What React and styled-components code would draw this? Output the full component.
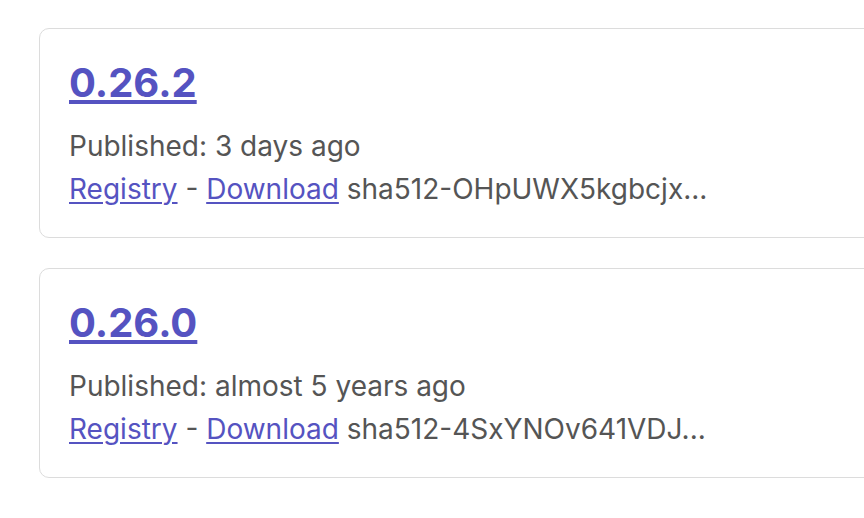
import React from 'react';
import styled, { createGlobalStyle } from 'styled-components';

const GlobalStyle = createGlobalStyle`
  body {
    margin: 0;
    background: #fff;
    font-family: Inter, 'Noto Sans', sans-serif;
    overflow: hidden;
  }
`;

const List = styled.div`
  display: flex;
  flex-direction: column;
  gap: 30px;
  padding: 28px 0 0 39px;
  overflow: hidden;
`;

const Card = styled.div`
  width: 900px;
  flex-shrink: 0;
  border: 1px solid #dcdcdc;
  border-radius: 10px;
  padding: 30px 29px 26px;
  box-sizing: border-box;
`;

const Version = styled.a`
  display: block;
  margin: 0 0 18px;
  font-size: 40px;
  line-height: 48px;
  font-weight: 700;
  color: #5553c1;
  text-decoration: underline;
  text-decoration-thickness: 4px;
  text-underline-offset: 3px;
`;

const Line = styled.div`
  font-size: 28px;
  line-height: 43px;
  color: #555;
  white-space: nowrap;
`;

const Link = styled.a`
  color: #5553c1;
  text-decoration: underline;
  text-decoration-thickness: 2px;
  text-underline-offset: 3px;
`;

const releases = [
  { version: '0.26.2', published: '3 days ago', hash: 'sha512-OHpUWX5kgbcjx...' },
  { version: '0.26.0', published: 'almost 5 years ago', hash: 'sha512-4SxYNOv641VDJ...' },
];

export default function App() {
  return (
    <>
      <GlobalStyle />
      <List>
        {releases.map((r) => (
          <Card key={r.version}>
            <Version href="#">{r.version}</Version>
            <Line>Published: {r.published}</Line>
            <Line>
              <Link href="#">Registry</Link> - <Link href="#">Download</Link> {r.hash}
            </Line>
          </Card>
        ))}
      </List>
    </>
  );
}
